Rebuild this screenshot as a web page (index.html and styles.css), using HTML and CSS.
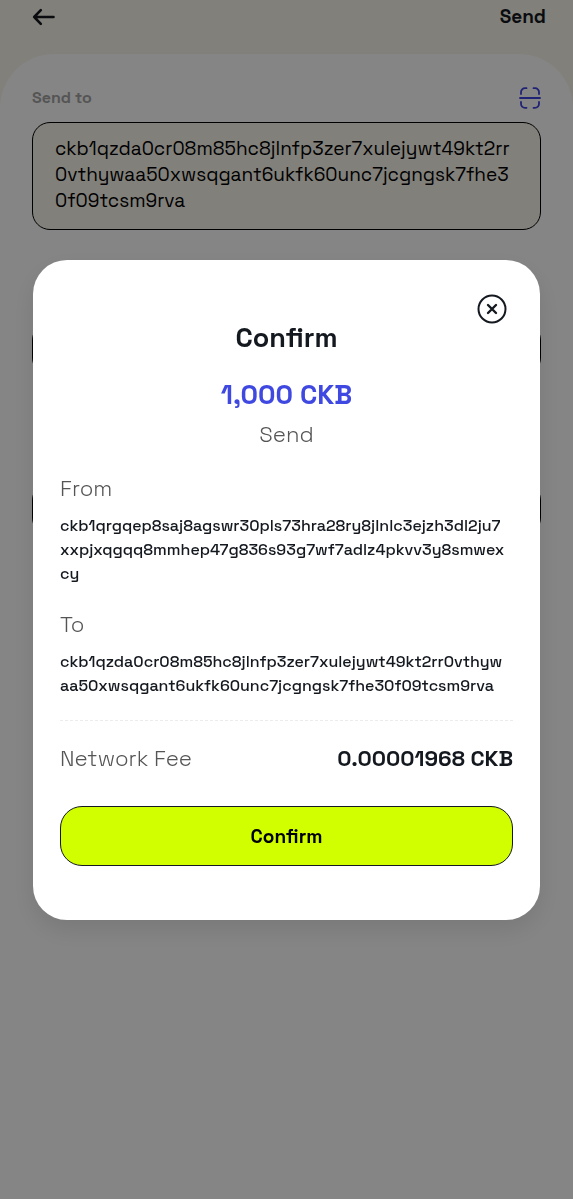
FILE: index.html
```html
<!DOCTYPE html>
<html lang="en">
<head>
  <meta charset="UTF-8" />
  <meta name="viewport" content="width=device-width, initial-scale=1" />
  <title>Send</title>
  <link rel="stylesheet" href="styles.css">
</head>
<body>
  <header class="topbar">
    <button class="icon-btn" type="button" aria-label="Back">
      <svg width="24" height="20" viewBox="0 0 24 20" fill="none" stroke="#14181f" stroke-width="2.6" stroke-linecap="round" stroke-linejoin="round">
        <path d="M21.5 10H2.2M8.8 3.2L2.2 10L8.8 16.8" />
      </svg>
    </button>
    <h1 class="topbar-title">Send</h1>
  </header>

  <main class="sheet">
    <div class="label-row">
      <label class="field-label" for="sendTo">Send to</label>
      <button class="icon-btn" type="button" aria-label="Scan code">
        <svg width="22" height="22" viewBox="0 0 22 22" fill="none" stroke="#3f42e0" stroke-width="1.8" stroke-linecap="round">
          <path d="M2 7V5.2A4 4 0 0 1 6 1.2H7.5M14.5 1.2H16A4 4 0 0 1 20 5.2V7M20 15V16.8A4 4 0 0 1 16 20.8H14.5M7.5 20.8H6A4 4 0 0 1 2 16.8V15M1 11H21" />
        </svg>
      </button>
    </div>
    <textarea id="sendTo" class="field address-field" rows="3" spellcheck="false">ckb1qzda0cr08m85hc8jlnfp3zer7xulejywt49kt2rr
0vthywaa50xwsqgant6ukfk60unc7jcgngsk7fhe3
0f09tcsm9rva</textarea>
    <input class="field" type="text" aria-label="Token" />
    <input class="field" type="text" aria-label="Amount" />
  </main>

  <div class="overlay">
    <section class="modal" role="dialog" aria-modal="true" aria-labelledby="modalTitle">
      <button class="icon-btn close-btn" type="button" aria-label="Close">
        <svg width="30" height="30" viewBox="0 0 30 30" fill="none" stroke="#14181f" stroke-width="2" stroke-linecap="round">
          <circle cx="15" cy="15" r="13.5" />
          <path d="M11 11L19 19M19 11L11 19" stroke-width="2.4" />
        </svg>
      </button>
      <h2 id="modalTitle" class="modal-title">Confirm</h2>
      <p class="amount">1,000 CKB</p>
      <p class="caption action">Send</p>

      <dl class="details">
        <dt class="caption">From</dt>
        <dd class="address">ckb1qrgqep8saj8agswr30pls73hra28ry8jlnlc3ejzh3dl2ju7<br>xxpjxqgqq8mmhep47g836s93g7wf7adlz4pkvv3y8smwex<br>cy</dd>
        <dt class="caption">To</dt>
        <dd class="address">ckb1qzda0cr08m85hc8jlnfp3zer7xulejywt49kt2rr0vthyw<br>aa50xwsqgant6ukfk60unc7jcgngsk7fhe30f09tcsm9rva</dd>
      </dl>

      <div class="fee">
        <span class="caption">Network Fee</span>
        <span class="fee-value">0.00001968 CKB</span>
      </div>
      <button class="confirm-btn" type="button">Confirm</button>
    </section>
  </div>
</body>
</html>
```
FILE: styles.css
```css
* {
  box-sizing: border-box;
}
body {
  margin: 0;
  min-height: 100vh;
  display: flex;
  flex-direction: column;
  font-family: "Space Grotesk", Inter, sans-serif;
  color: #14181f;
  background-color: #f8f5ea;
}
h1, h2, p, dl, dd {
  margin: 0;
}
button, input, textarea {
  font-family: inherit;
  color: inherit;
}
.icon-btn {
  padding: 0;
  border: none;
  background: none;
  cursor: pointer;
}
.icon-btn svg {
  display: block;
}
.topbar {
  display: flex;
  align-items: center;
  justify-content: space-between;
  height: 54px;
  padding: 0 27px 20px 32px;
}
.topbar-title {
  font-size: 19px;
  line-height: 24px;
  font-weight: 600;
}
.sheet {
  flex: 1;
  padding: 32px 32px 0;
  border-radius: 54px 54px 0 0;
  background-color: #fff;
}
.label-row {
  display: flex;
  align-items: center;
  justify-content: space-between;
  height: 23px;
  margin-bottom: 13px;
}
.field-label {
  font-size: 16px;
  font-weight: 600;
  color: #a3a3a3;
}
.field {
  display: block;
  width: 100%;
  height: 54px;
  margin-bottom: 106px;
  padding: 13px 22px;
  border: 1px solid #000;
  border-radius: 18px;
  background-color: #f8f5ea;
}
.address-field {
  height: 108px;
  margin-bottom: 92px;
  font-size: 19px;
  line-height: 26px;
  color: #000;
  resize: none;
  overflow: hidden;
  white-space: pre;
}
.overlay {
  position: fixed;
  inset: 0;
  display: flex;
  align-items: center;
  padding: 0 33px 19px;
  background-color: rgba(0, 0, 0, 0.48);
}
.modal {
  display: flex;
  flex-direction: column;
  width: 100%;
  padding: 34px 27px 54px;
  border-radius: 34px;
  background-color: #fff;
  box-shadow: 0 10px 24px rgba(0, 0, 0, 0.1);
}
.close-btn {
  align-self: flex-end;
  margin-right: 6px;
}
.modal-title {
  font-size: 27px;
  line-height: 28px;
  font-weight: 600;
  text-align: center;
}
.amount {
  margin-top: 26px;
  font-size: 27px;
  line-height: 34px;
  font-weight: 700;
  text-align: center;
  color: #3f48e0;
}
.caption {
  font-size: 22px;
  line-height: 28px;
  font-weight: 300;
  color: #555;
}
.action {
  margin-top: 8px;
  text-align: center;
}
.details {
  margin-top: 26px;
  padding-bottom: 22px;
  border-bottom: 1px dashed #ececec;
}
.address {
  margin-top: 12px;
  font-size: 16px;
  line-height: 24px;
  font-weight: 500;
  white-space: nowrap;
}
.address + .caption {
  margin-top: 24px;
}
.fee {
  display: flex;
  align-items: center;
  justify-content: space-between;
  margin: 23px 0 34px;
}
.fee-value {
  font-size: 22px;
  line-height: 28px;
  font-weight: 600;
}
.confirm-btn {
  height: 60px;
  border: 1px solid #14181f;
  border-radius: 22px;
  background-color: #d1ff00;
  color: #000;
  font-size: 19px;
  font-weight: 600;
  cursor: pointer;
}
```
